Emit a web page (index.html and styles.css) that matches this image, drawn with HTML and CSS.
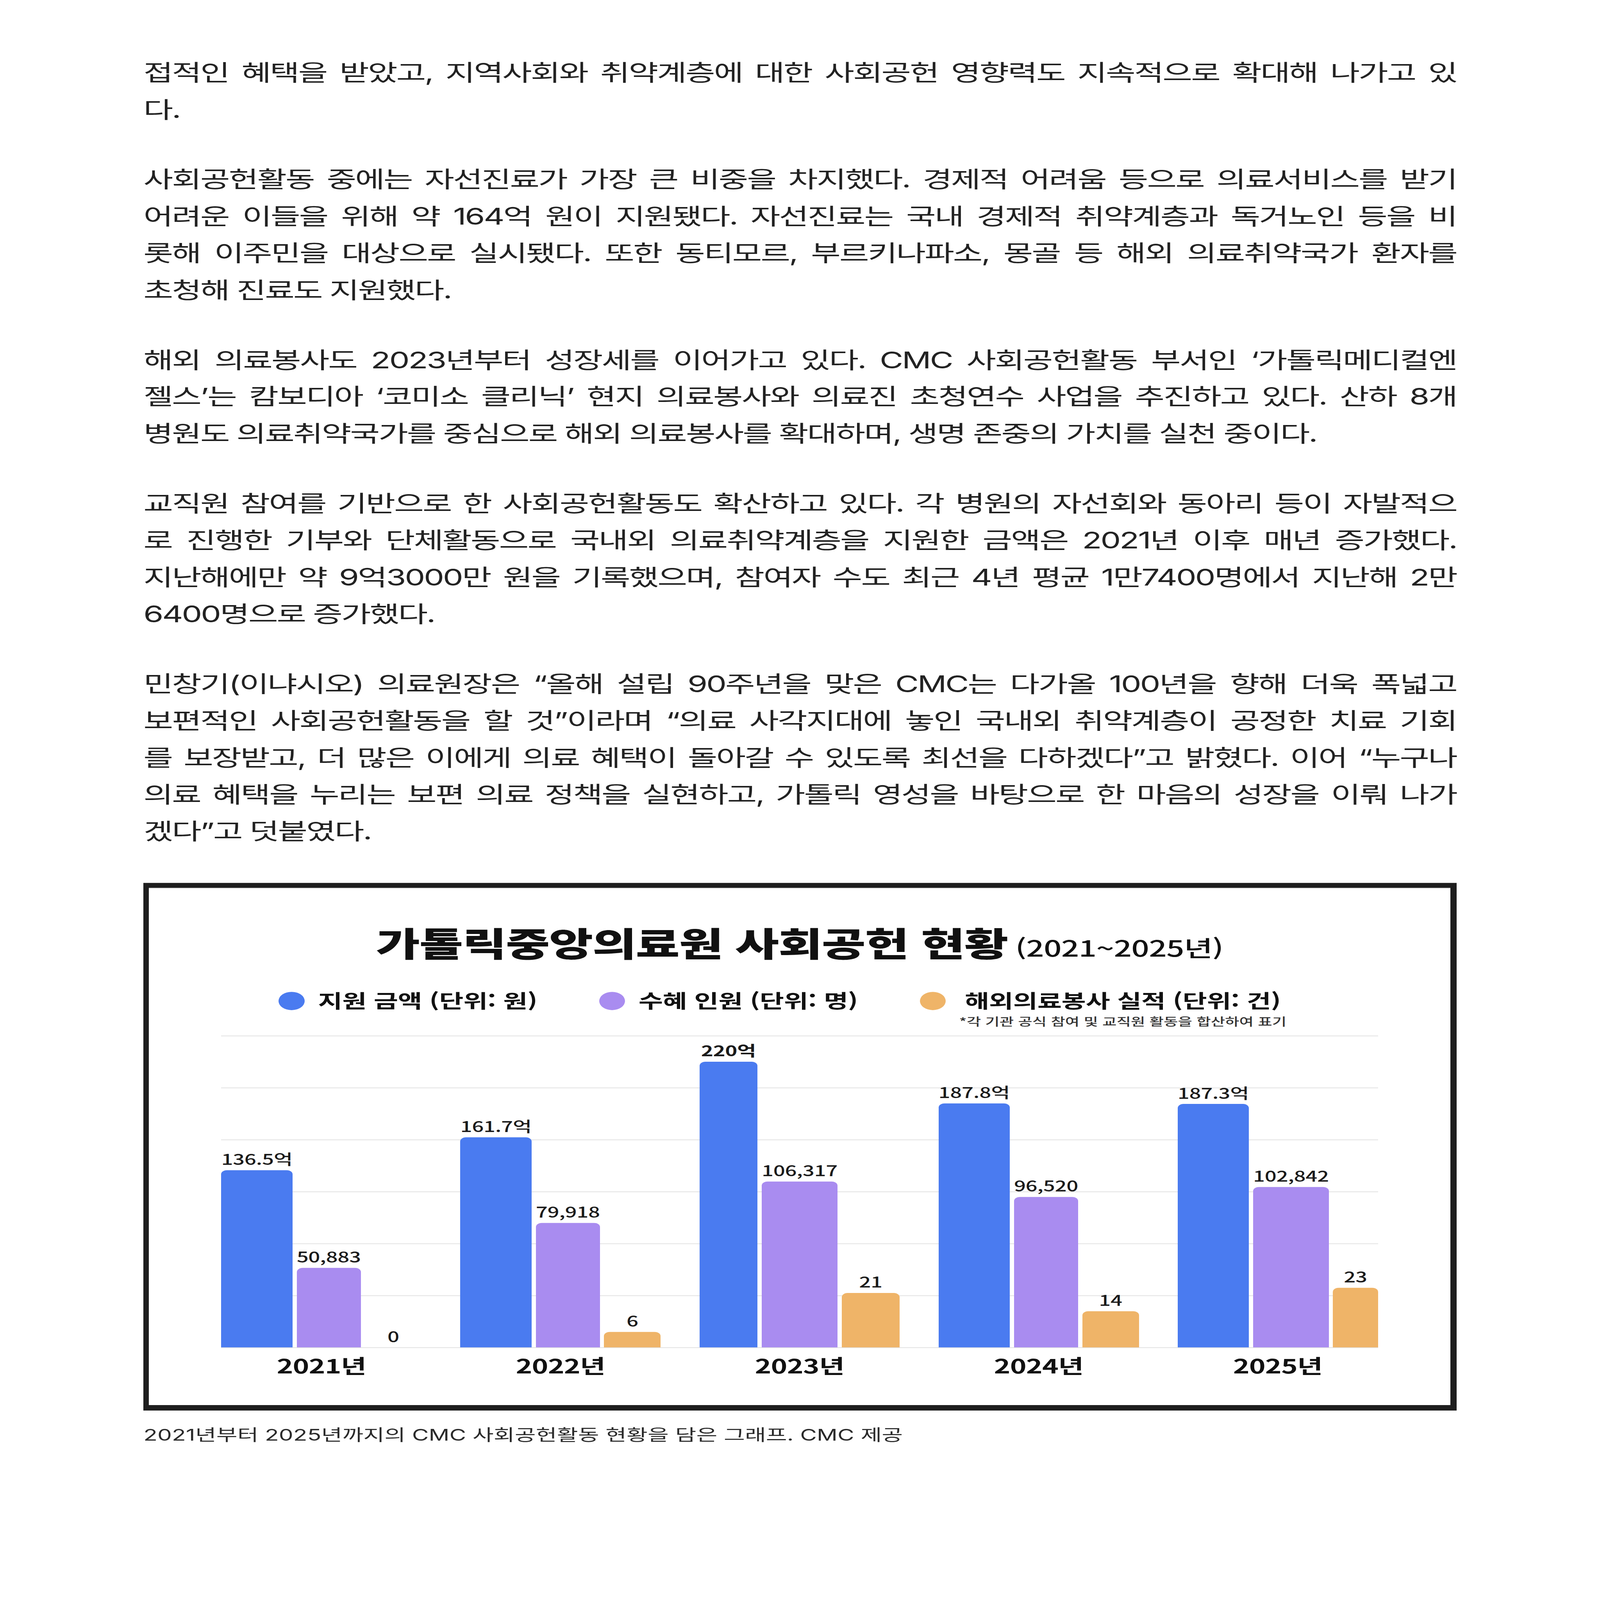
FILE: index.html
```html
<!DOCTYPE html>
<html lang="ko">
<head>
<meta charset="utf-8">
<title>가톨릭중앙의료원 사회공헌 현황</title>
<link rel="stylesheet" href="styles.css">
<script src="script.js"></script>
</head>
<body>
<div class="page">
<article class="article">
  <p class="para">
    <span class="line">접적인 혜택을 받았고, 지역사회와 취약계층에 대한 사회공헌 영향력도 지속적으로 확대해 나가고 있</span>
    <span class="line">다.</span>
  </p>
  <p class="para">
    <span class="line">사회공헌활동 중에는 자선진료가 가장 큰 비중을 차지했다. 경제적 어려움 등으로 의료서비스를 받기</span>
    <span class="line">어려운 이들을 위해 약 164억 원이 지원됐다. 자선진료는 국내 경제적 취약계층과 독거노인 등을 비</span>
    <span class="line">롯해 이주민을 대상으로 실시됐다. 또한 동티모르, 부르키나파소, 몽골 등 해외 의료취약국가 환자를</span>
    <span class="line">초청해 진료도 지원했다.</span>
  </p>
  <p class="para">
    <span class="line">해외 의료봉사도 2023년부터 성장세를 이어가고 있다. CMC 사회공헌활동 부서인 ‘가톨릭메디컬엔</span>
    <span class="line">젤스’는 캄보디아 ‘코미소 클리닉’ 현지 의료봉사와 의료진 초청연수 사업을 추진하고 있다. 산하 8개</span>
    <span class="line">병원도 의료취약국가를 중심으로 해외 의료봉사를 확대하며, 생명 존중의 가치를 실천 중이다.</span>
  </p>
  <p class="para">
    <span class="line">교직원 참여를 기반으로 한 사회공헌활동도 확산하고 있다. 각 병원의 자선회와 동아리 등이 자발적으</span>
    <span class="line">로 진행한 기부와 단체활동으로 국내외 의료취약계층을 지원한 금액은 2021년 이후 매년 증가했다.</span>
    <span class="line">지난해에만 약 9억3000만 원을 기록했으며, 참여자 수도 최근 4년 평균 1만7400명에서 지난해 2만</span>
    <span class="line">6400명으로 증가했다.</span>
  </p>
  <p class="para">
    <span class="line">민창기(이냐시오) 의료원장은 “올해 설립 90주년을 맞은 CMC는 다가올 100년을 향해 더욱 폭넓고</span>
    <span class="line">보편적인 사회공헌활동을 할 것”이라며 “의료 사각지대에 놓인 국내외 취약계층이 공정한 치료 기회</span>
    <span class="line">를 보장받고, 더 많은 이에게 의료 혜택이 돌아갈 수 있도록 최선을 다하겠다”고 밝혔다. 이어 “누구나</span>
    <span class="line">의료 혜택을 누리는 보편 의료 정책을 실현하고, 가톨릭 영성을 바탕으로 한 마음의 성장을 이뤄 나가</span>
    <span class="line">겠다”고 덧붙였다.</span>
  </p>

  <figure class="figure">
    <div class="chart">
      <div class="chart-title">
        <span class="t-main">가톨릭중앙의료원 사회공헌 현황</span>
        <span class="t-sub">(2021~2025년)</span>
      </div>
      <div class="legend">
        <div class="lg-item">
          <span class="dot blue"></span>
          <span class="lg-label">지원 금액 (단위: 원)</span>
        </div>
        <div class="lg-item">
          <span class="dot purple"></span>
          <span class="lg-label">수혜 인원 (단위: 명)</span>
        </div>
        <div class="lg-item">
          <span class="dot orange"></span>
          <div class="lg-col">
            <span class="lg-label">해외의료봉사 실적 (단위: 건)</span>
            <span class="lg-note">*각 기관 공식 참여 및 교직원 활동을 합산하여 표기</span>
          </div>
        </div>
      </div>
      <div class="plot">
        <div class="group">
          <div class="col"><span class="val">136.5억</span><div class="bar blue" style="height:7.77rem"></div></div>
          <div class="col"><span class="val">50,883</span><div class="bar purple" style="height:3.48rem"></div></div>
          <div class="col"><span class="val">0</span><div class="bar orange" style="height:0rem"></div></div>
        </div>
        <div class="group">
          <div class="col"><span class="val">161.7억</span><div class="bar blue" style="height:9.21rem"></div></div>
          <div class="col"><span class="val">79,918</span><div class="bar purple" style="height:5.46rem"></div></div>
          <div class="col"><span class="val">6</span><div class="bar orange" style="height:0.68rem"></div></div>
        </div>
        <div class="group">
          <div class="col"><span class="val strong">220억</span><div class="bar blue" style="height:12.53rem"></div></div>
          <div class="col"><span class="val">106,317</span><div class="bar purple" style="height:7.27rem"></div></div>
          <div class="col"><span class="val">21</span><div class="bar orange" style="height:2.39rem"></div></div>
        </div>
        <div class="group">
          <div class="col"><span class="val">187.8억</span><div class="bar blue" style="height:10.70rem"></div></div>
          <div class="col"><span class="val">96,520</span><div class="bar purple" style="height:6.60rem"></div></div>
          <div class="col"><span class="val">14</span><div class="bar orange" style="height:1.59rem"></div></div>
        </div>
        <div class="group">
          <div class="col"><span class="val">187.3억</span><div class="bar blue" style="height:10.67rem"></div></div>
          <div class="col"><span class="val">102,842</span><div class="bar purple" style="height:7.03rem"></div></div>
          <div class="col"><span class="val">23</span><div class="bar orange" style="height:2.62rem"></div></div>
        </div>
      </div>
      <div class="years">
        <span>2021년</span>
        <span>2022년</span>
        <span>2023년</span>
        <span>2024년</span>
        <span>2025년</span>
      </div>
    </div>
  </figure>
  <p class="caption">2021년부터 2025년까지의 CMC 사회공헌활동 현황을 담은 그래프. CMC 제공</p>
</article>
</div>
</body>
</html>
```

FILE: styles.css
```css
/* Layout unit: 1rem = 1/49.57 of the window width (100 px of the 4957 px design frame).
   --squash (set by script.js) compensates when the window's aspect differs from 4957x7016. */
html {
  font-size: calc(100vw / 49.57);
  overflow: hidden;
}

html, body {
  margin: 0;
  padding: 0;
  background: #ffffff;
}

body {
  height: 100vh;
  overflow: hidden;
  font-family: "Inter", "Noto Sans CJK KR", sans-serif;
  color: #222222;
}

.page {
  transform: scaleY(var(--squash, 1));
  transform-origin: 0 0;
}

.article {
  width: 40.68rem;
  margin: 0 auto;
  padding-top: 2.39rem;
}

.para {
  margin: 0 0 1.45rem;
  font-size: 1rem;
  line-height: 1.615rem;
  letter-spacing: -0.04rem;
}

.line {
  display: block;
  text-align: justify;
  text-align-last: justify;
}

.line:last-child {
  text-align-last: auto;
}

/* ---------- chart figure ---------- */
.figure {
  margin: 0;
  border-style: solid;
  border-color: #1e1e1e;
  border-width: 0.22rem 0.2rem 0.25rem 0.18rem;
}

.chart {
  border-top: 0.03rem solid #d0d0d0;
  padding: 1.5rem 0 1rem;
  background: #ffffff;
  font-family: "Noto Sans CJK KR", sans-serif;
  color: #111111;
}

.chart-title {
  display: flex;
  justify-content: center;
  align-items: baseline;
  gap: 0.24rem;
  line-height: 1.7rem;
  white-space: nowrap;
}

.t-main {
  font-size: 1.48rem;
  font-weight: 900;
  letter-spacing: -0.02rem;
}

.t-sub {
  font-size: 0.97rem;
  font-weight: 500;
  line-height: 0.97rem;
  letter-spacing: -0.01rem;
}

.legend {
  display: flex;
  align-items: flex-start;
  gap: 1.92rem;
  padding-left: 4.02rem;
  margin-top: 1.18rem;
}

.lg-item {
  display: flex;
  align-items: flex-start;
  gap: 0.42rem;
}

.dot {
  flex: none;
  width: 0.8rem;
  height: 0.8rem;
  border-radius: 50%;
  margin-top: 0.16rem;
}

.lg-label {
  font-size: 0.82rem;
  font-weight: 700;
  line-height: 1rem;
  letter-spacing: -0.005rem;
  white-space: nowrap;
}

.lg-col {
  display: flex;
  flex-direction: column;
  align-items: center;
}

.lg-note {
  margin-top: 0.17rem;
  font-size: 0.48rem;
  font-weight: 500;
  line-height: 0.56rem;
  color: #333333;
  white-space: nowrap;
}

.blue { background: #4a7bf0; }
.purple { background: #a98cf0; }
.orange { background: #efb468; }

.plot {
  margin: 0.35rem 2.24rem 0;
  height: 13.67rem;
  border-bottom: 0.03rem solid #d8d8d8;
  background: repeating-linear-gradient(to bottom, #e3e3e3 0 0.03rem, transparent 0.03rem 2.2783rem);
  display: grid;
  grid-template-columns: repeat(5, 1fr);
  column-gap: 1.2rem;
}

.group {
  display: flex;
  gap: 0.13rem;
}

.col {
  flex: 1;
  display: flex;
  flex-direction: column;
  justify-content: flex-end;
  align-items: center;
}

.val {
  margin-bottom: 0.11rem;
  font-size: 0.64rem;
  font-weight: 500;
  line-height: 0.8rem;
  letter-spacing: -0.005rem;
  white-space: nowrap;
  color: #1a1a1a;
}

.val.strong {
  font-weight: 700;
}

.bar {
  width: 100%;
  border-radius: 0.18rem 0.18rem 0 0;
}

.years {
  margin: 0 2.24rem;
  display: grid;
  grid-template-columns: repeat(5, 1fr);
  column-gap: 1.2rem;
  text-align: center;
  font-size: 0.86rem;
  font-weight: 700;
  line-height: 1.5rem;
  letter-spacing: -0.01rem;
}

.caption {
  margin: 0.57rem 0 0;
  font-size: 0.71rem;
  line-height: 0.99rem;
  color: #2a2a2a;
}
```

FILE: script.js
```js
/* The design frame is 4957 x 7016. Layout is sized from the window width (rem);
   if the window has a different aspect ratio, squash the page vertically so the
   whole frame still fits the window height. */
(function () {
  var root = document.documentElement;
  function fit() {
    var sx = window.innerWidth / 4957;
    var sy = window.innerHeight / 7016;
    root.style.setProperty('--squash', (sy / sx).toFixed(5));
  }
  fit();
  window.addEventListener('resize', fit);
})();
```
